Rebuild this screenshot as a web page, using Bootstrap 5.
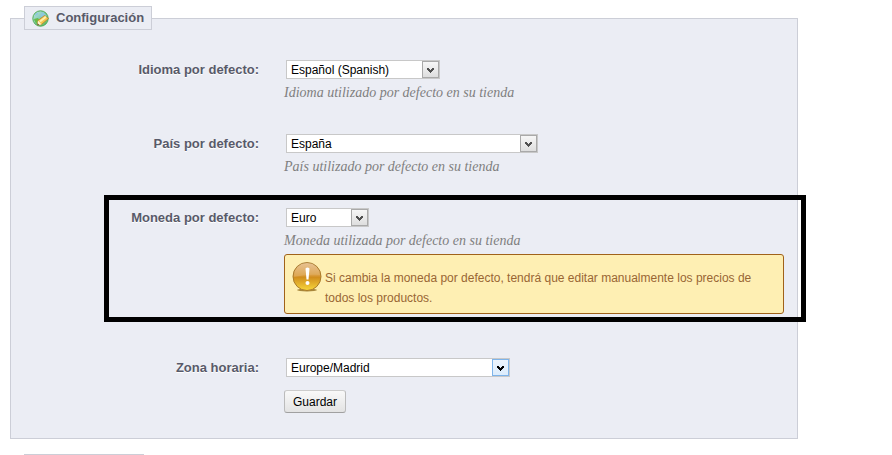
<!DOCTYPE html>
<html lang="es">
<head>
<meta charset="utf-8">
<meta name="viewport" content="width=device-width, initial-scale=1">
<title>Configuración</title>
<link href="https://cdn.jsdelivr.net/npm/bootstrap@5.3.0/dist/css/bootstrap.min.css" rel="stylesheet">
<style>
body{font-family:"Liberation Sans",Arial,sans-serif;font-size:12px;line-height:20px;color:#000;background:#fff}
.page-main{padding:6px 94px 0 10px}
.panel{background:#ebedf4;border:1px solid #ccced7;padding:0 13px 25px}
.panel-title{float:none;width:auto;height:24px;margin:0 0 30px;padding:0 7px;gap:7px;background:#ebedf4;border:1px solid #ccced7;font-size:13px;line-height:22px;font-weight:700;color:#585a69}
.field-row{gap:25px;margin-bottom:31px}
.field-label{flex:0 0 235px;text-align:right;font-size:13px;line-height:19px;font-weight:700;color:#585a69;text-shadow:0 1px 0 #fff}
.select-box{height:19px;margin-left:2px}
.select-box select{width:100%;height:19px;padding:2px 20px 0 4px;appearance:none;background:#fff;border:1px solid #c8c8c8;border-radius:0;font-size:12px;line-height:15px;color:#000}
.select-arrow{top:1px;right:1px;width:17px;height:17px;border:1px solid #a9a9a9;background:linear-gradient(#f6f6f6,#dedede);color:#505050;pointer-events:none}
.select-arrow.is-hot{border-color:#7eb4ea;background:linear-gradient(#ecf4fc,#dcecfc);color:#000}
.w-lang{width:154px}.w-country{width:252px}.w-money{width:83px}.w-zone{width:224px}
.hint{margin:4px 0 0;font:italic 14px/20px Georgia,"Liberation Serif",serif;color:#7f7f7f}
.notice{max-width:500px;min-height:60px;margin:3px 0 0;padding:7px 8px 4px 7px;gap:3px;background:#feefb3;border:1px solid #a0621a;border-radius:3px;color:#996633}
.notice p{padding-top:6px;margin:0}
.save-btn{height:23px;margin-top:13px;padding:0 8px;border:1px solid;border-color:#ccc #bbb #a0a0a0;border-radius:3px;background:linear-gradient(#f9f9f9,#e3e3e3);font-size:12px;line-height:20px;color:#000}
.marker{top:-13px;right:-22px;bottom:-8px;left:80px;border:5px solid #000;pointer-events:none}
.marker::after{content:"";position:absolute;top:0;right:0;bottom:0;width:3px;background:#fff}
.money-row{margin-bottom:44px}
.next-title{width:120px;margin:15px 0 0 14px;border-top:1px solid #ccced7}
</style>
<script src="https://cdn.jsdelivr.net/npm/bootstrap@5.3.0/dist/js/bootstrap.bundle.min.js"></script>
</head>
<body>
<svg width="0" height="0" class="position-absolute" aria-hidden="true">
  <symbol id="chevron" viewBox="0 0 15 15"><path d="M4 6h2v1h1v1h1v-1h1v-1h2v2h-1v1h-1v1h-1v1h-1v-1h-1v-1h-1v-1h-1z" fill="currentColor"/></symbol>
</svg>
<main class="page-main">
  <form>
    <fieldset class="panel">
      <legend class="panel-title d-inline-flex align-items-center">
        <svg width="17" height="17" viewBox="0 0 17 17" aria-hidden="true">
          <defs><linearGradient id="globe" x2="1" y2="1"><stop stop-color="#c4e6e4"/><stop offset=".5" stop-color="#7fcbb0"/><stop offset="1" stop-color="#58b447"/></linearGradient></defs>
          <circle cx="8.5" cy="8.5" r="7.7" fill="url(#globe)" stroke="#4eab51"/>
          <path d="M2.500 6q1-3 4-4l-1 3zM10 2l4 3-3 3-3-2z" fill="#8cc9dd"/>
          <path d="M2 9l4-1 2 3-1 4q-4-1-5-6z" fill="#68bd47"/>
          <path d="M5.500 15l.5-4.500 6.500-5 4 3-7 6z" fill="#f5c64e" stroke="#b58327" stroke-width=".8"/>
          <path d="M8 11.500l6-4.800" stroke="#fff0a8" stroke-width="2"/>
          <path d="M5.500 15l.5-4.500 3.500 4z" fill="#fff3d5"/><path d="M5.300 15.300l.3-2 1.600 1.500z" fill="#574928"/>
        </svg>
        <span>Configuración</span>
      </legend>

      <div class="field-row d-flex align-items-start">
        <label class="field-label" for="lang">Idioma por defecto:</label>
        <div class="flex-fill">
          <div class="select-box w-lang position-relative d-flex"><select id="lang"><option>Español (Spanish)</option></select><span class="select-arrow position-absolute d-flex"><svg width="15" height="15" aria-hidden="true"><use href="#chevron"/></svg></span></div>
          <p class="hint">Idioma utilizado por defecto en su tienda</p>
        </div>
      </div>

      <div class="field-row d-flex align-items-start">
        <label class="field-label" for="country">País por defecto:</label>
        <div class="flex-fill">
          <div class="select-box w-country position-relative d-flex"><select id="country"><option>España</option></select><span class="select-arrow position-absolute d-flex"><svg width="15" height="15" aria-hidden="true"><use href="#chevron"/></svg></span></div>
          <p class="hint">País utilizado por defecto en su tienda</p>
        </div>
      </div>

      <div class="field-row money-row d-flex align-items-start position-relative">
        <label class="field-label" for="money">Moneda por defecto:</label>
        <div class="flex-fill">
          <div class="select-box w-money position-relative d-flex"><select id="money"><option>Euro</option></select><span class="select-arrow position-absolute d-flex"><svg width="15" height="15" aria-hidden="true"><use href="#chevron"/></svg></span></div>
          <p class="hint">Moneda utilizada por defecto en su tienda</p>
          <div class="notice d-flex align-items-start" role="note">
            <svg class="flex-shrink-0" width="30" height="30" viewBox="0 0 30 30" aria-hidden="true">
              <defs><linearGradient id="amber" x2="0" y2="1"><stop stop-color="#e5ba85"/><stop offset=".48" stop-color="#d99a39"/><stop offset=".52" stop-color="#d08c1c"/><stop offset="1" stop-color="#f8d83c"/></linearGradient></defs>
              <ellipse cx="15" cy="28" rx="10" ry="1.500" fill="#a8873b"/>
              <circle cx="15" cy="14.500" r="14" fill="url(#amber)" stroke="#a97a2c"/>
              <path d="M2 14a13 13 0 0 1 26-1q-13-1-26 2z" fill="#fff" opacity=".13"/>
              <path d="M13.500 6.500q2-2 4 0l-1 11h-2z" fill="#fff"/>
              <circle cx="15.500" cy="21" r="2" fill="#fff"/>
            </svg>
            <p>Si cambia la moneda por defecto, tendrá que editar manualmente los precios de todos los productos.</p>
          </div>
        </div>
        <div class="marker position-absolute"></div>
      </div>

      <div class="d-flex align-items-start field-row mb-0">
        <label class="field-label" for="zone">Zona horaria:</label>
        <div class="flex-fill">
          <div class="select-box w-zone position-relative d-flex"><select id="zone"><option>Europe/Madrid</option></select><span class="select-arrow is-hot position-absolute d-flex"><svg width="15" height="15" aria-hidden="true"><use href="#chevron"/></svg></span></div>
          <button type="submit" class="btn save-btn">Guardar</button>
        </div>
      </div>
    </fieldset>
  </form>
  <div class="next-title"></div>
</main>
</body>
</html>
